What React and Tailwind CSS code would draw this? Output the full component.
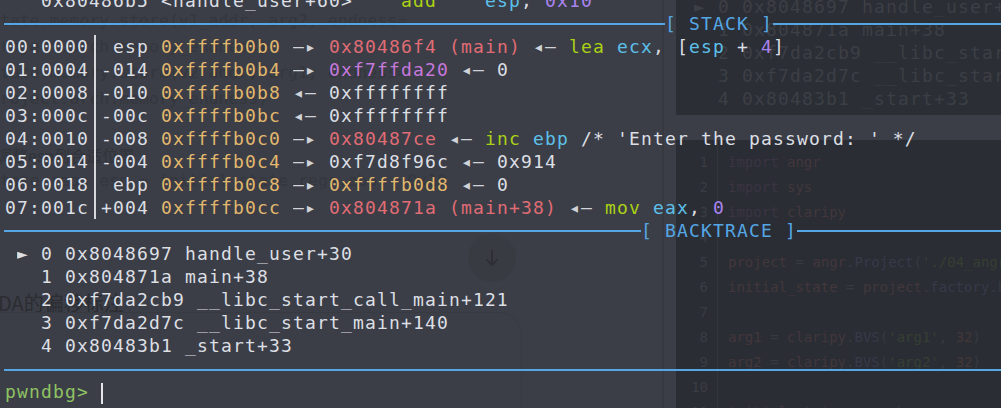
import React from "react";

const W = "text-[#dcdfe4]";
const Y = "text-[#e2b86e]";
const R = "text-[#e06c75]";
const M = "text-[#c678dd]";
const L = "text-[#aad115]";
const C = "text-[#5cc0ea]";
const P = "text-[#a983ee]";
const A = "text-[#d0d3d8]";

function Row({ children }) {
  return <div className="h-[23px] leading-[23px] whitespace-pre pl-[5px]">{children}</div>;
}

function Bar() {
  return (
    <span className="inline-flex w-[12px] h-[23px] justify-center align-top">
      <span className="w-[2px] h-full bg-[#d6d8dc]" />
    </span>
  );
}

function Ra() {
  return <span className={"inline-block w-[24px] overflow-hidden align-top " + A}>—▸</span>;
}
function La() {
  return <span className={"inline-block w-[24px] overflow-hidden align-top " + A}>◂—</span>;
}

function Header({ left, label }) {
  return (
    <div className="h-[23px] flex items-center pl-[4px]">
      <div className="h-[2px] bg-[#55a6e4] shrink-0" style={{ width: left }} />
      <span className="whitespace-pre text-[#55a6e4] leading-[23px]">{label}</span>
      <div className="h-[2px] bg-[#55a6e4] flex-1" />
    </div>
  );
}

const K = "text-[#3c3443]";
const N = "text-[#43373b]";
const O = "text-[#373a40]";
const B = "text-[#363a49]";
const S = "text-[#363f33]";
const D = "text-[#443738]";

const ghostCode = [
  [["import", K], [" angr", N]],
  [["import", K], [" sys", N]],
  [["import", K], [" claripy", N]],
  [],
  [["project", N], [" = ", O], ["angr", N], [".", O], ["Project", B], ["(", O], ["'./04_angr_symbolic_stack'", S], [")", O]],
  [["initial_state", N], [" = ", O], ["project", N], [".", O], ["factory", B], [".blank_state()", O]],
  [],
  [["arg1", N], [" = ", O], ["claripy", N], [".", O], ["BVS", B], ["(", O], ["'arg1'", S], [", ", O], ["32", D], [")", O]],
  [["arg2", N], [" = ", O], ["claripy", N], [".", O], ["BVS", B], ["(", O], ["'arg2'", S], [", ", O], ["32", D], [")", O]],
  [],
  [["initial_state", N], [".regs.ebp", O]],
];

export default function App() {
  return (
    <div className="relative w-[1001px] h-[408px] overflow-hidden bg-[#3b3e46] font-['DejaVu_Sans_Mono',monospace] text-[18px] tracking-[1.16px]">
      {/* ghost windows behind the translucent terminal */}
      <div className="absolute left-[662px] top-0 w-[2px] h-[408px] bg-[#363940]" />
      <div className="absolute left-[676px] top-0 w-[325px] h-[115px] bg-[#2b2e35] overflow-hidden">
        <div className="mt-[-5px] ml-[18px] text-[#3c3f46] whitespace-pre leading-[23px]">
          <div>► 0 0x8048697 handle_user+30</div>
          <div>  1 0x804871a main+38</div>
          <div>  2 0xf7da2cb9 __libc_start_call_main+121</div>
          <div>  3 0xf7da2d7c __libc_start_main+140</div>
          <div>  4 0x80483b1 _start+33</div>
        </div>
      </div>
      <div className="absolute left-[676px] top-[140px] w-[325px] h-[268px] bg-[#2a2d34] overflow-hidden flex tracking-normal">
        <div className="w-[32px] shrink-0 pt-[10px] flex flex-col items-end text-[14px] leading-[25px] text-[#393c43]">
          {ghostCode.map((_, i) => (
            <div key={i}>{i + 1}</div>
          ))}
        </div>
        <div className="ml-[9px] w-[1px] shrink-0 bg-[#33363d]" />
        <div className="ml-[10px] shrink-0 pt-[10px] text-[14px] leading-[25px] whitespace-pre">
          {ghostCode.map((line, i) => (
            <div key={i} className="h-[25px]">
              {line.map(([t, c], j) => (
                <span key={j} className={c}>{t}</span>
              ))}
            </div>
          ))}
        </div>
      </div>
      <div className="absolute left-0 top-[8px] text-[16.5px] leading-[26px] tracking-normal text-[#34373e] whitespace-pre">
        <div>tate.memory.store(v1_addr, arg2, endness=</div>
        <div>roject.arch.memory_endness)</div>
        <div>tate.memory.store(v2_addr, arg1, endness=</div>
        <div>roject.arch.memory_endness)</div>
      </div>
      <div className="absolute left-[-4px] top-[145px] text-[16px] leading-[20px] tracking-normal text-[#31343a] whitespace-pre font-['Noto_Sans_CJK_SC',sans-serif]">
        调整esp到合适位置
      </div>
      <div className="absolute left-0 top-[171px] text-[16.5px] leading-[20px] tracking-normal text-[#34373e] whitespace-pre">
        tate.regs.esp = initial_state.regs.ebp - 0x10
      </div>
      <div className="absolute left-[-2px] top-[291px] text-[20px] leading-[24px] tracking-normal text-[#2b2d32] whitespace-pre font-['Noto_Sans_CJK_SC',sans-serif]">
        DA的偏移标注
      </div>
      <div className="absolute left-[468px] top-[234px] w-[48px] h-[48px] rounded-full bg-[#383b42] flex items-center justify-center">
        <svg width="16" height="18" viewBox="0 0 16 18" fill="none" stroke="#2c2e33" strokeWidth="1.6">
          <path d="M8 1v15M2.5 10.5L8 16l5.5-5.5" />
        </svg>
      </div>
      <div className="absolute left-[-20px] top-[312px] w-[542px] h-[200px] rounded-tr-[22px] border border-[#373a41]" />

      {/* terminal */}
      <div className={"relative mt-[-11px] flex flex-col " + W}>
        <Row>
          {"   "}
          <span className={W}>0x80486b5 &lt;handle_user+60&gt;</span>
          {"    "}
          <span className={L}>add</span>
          {"    "}
          <span className={C}>esp</span>
          <span className={W}>, </span>
          <span className={P}>0x10</span>
        </Row>
        <Header left="661px" label="[ STACK ]" />
        <Row>
          00:0000<Bar /> esp <span className={Y}>0xffffb0b0</span> <Ra /> <span className={R}>0x80486f4 (main)</span> <La />{" "}
          <span className={L}>lea</span> <span className={C}>ecx</span>, [<span className={C}>esp</span> + <span className={P}>4</span>]
        </Row>
        <Row>
          01:0004<Bar />-014 <span className={Y}>0xffffb0b4</span> <Ra /> <span className={M}>0xf7ffda20</span> <La /> 0
        </Row>
        <Row>
          02:0008<Bar />-010 <span className={Y}>0xffffb0b8</span> <La /> 0xffffffff
        </Row>
        <Row>
          03:000c<Bar />-00c <span className={Y}>0xffffb0bc</span> <La /> 0xffffffff
        </Row>
        <Row>
          04:0010<Bar />-008 <span className={Y}>0xffffb0c0</span> <Ra /> <span className={R}>0x80487ce</span> <La />{" "}
          <span className={L}>inc</span> <span className={C}>ebp</span> /* 'Enter the password: ' */
        </Row>
        <Row>
          05:0014<Bar />-004 <span className={Y}>0xffffb0c4</span> <Ra /> 0xf7d8f96c <La /> 0x914
        </Row>
        <Row>
          06:0018<Bar /> ebp <span className={Y}>0xffffb0c8</span> <Ra /> <span className={Y}>0xffffb0d8</span> <La /> 0
        </Row>
        <Row>
          07:001c<Bar />+004 <span className={Y}>0xffffb0cc</span> <Ra /> <span className={R}>0x804871a (main+38)</span> <La />{" "}
          <span className={L}>mov</span> <span className={C}>eax</span>, <span className={P}>0</span>
        </Row>
        <Header left="637px" label="[ BACKTRACE ]" />
        <Row>
          {" "}
          <span className="inline-block w-[12px] overflow-hidden align-top">►</span> 0 0x8048697 handle_user+30
        </Row>
        <Row>{"   1 0x804871a main+38"}</Row>
        <Row>{"   2 0xf7da2cb9 __libc_start_call_main+121"}</Row>
        <Row>{"   3 0xf7da2d7c __libc_start_main+140"}</Row>
        <Row>{"   4 0x80483b1 _start+33"}</Row>
        <div className="h-[23px] flex items-center pl-[4px]">
          <div className="h-[2px] bg-[#55a6e4] flex-1 mt-[2px]" />
        </div>
        <Row>
          <span className="text-[#8fc263]">pwndbg&gt;</span> <span className="inline-block w-[2px] h-[21px] bg-[#e4e6ea] align-middle" />
        </Row>
      </div>
    </div>
  );
}
